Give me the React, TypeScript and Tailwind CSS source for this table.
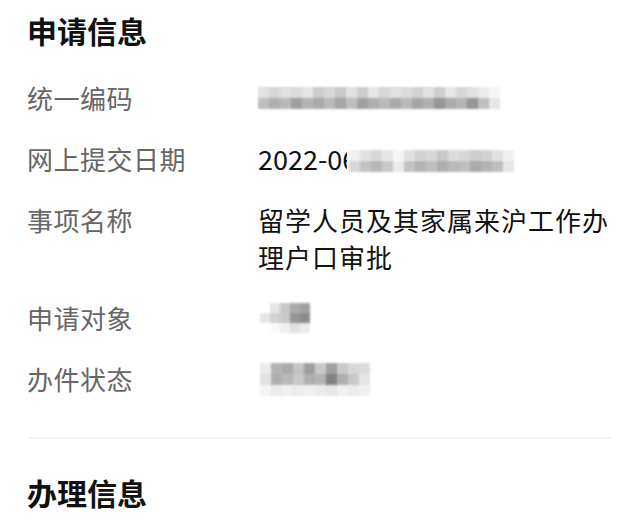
import React from "react";

type Mosaic = { cell: number; rows: number[][] };

function Blur({ m, className }: { m: Mosaic; className?: string }) {
  return (
    <div className={"flex flex-col blur-[1px] " + (className ?? "")}>
      {m.rows.map((r, i) => (
        <div key={i} className="flex">
          {r.map((v, j) => (
            <div
              key={j}
              style={{
                width: m.cell,
                height: m.cell,
                backgroundColor: `rgb(${v},${v},${v})`,
              }}
            />
          ))}
        </div>
      ))}
    </div>
  );
}

const m1: Mosaic = {
  cell: 11,
  rows: [
    [225, 215, 225, 220, 230, 205, 215, 200, 225, 205, 230, 215, 225, 220, 210, 225, 205, 230, 215, 225, 235, 245],
    [190, 175, 185, 160, 180, 170, 185, 165, 190, 160, 175, 185, 170, 185, 165, 175, 150, 170, 180, 150, 190, 230],
  ],
};

const m2: Mosaic = {
  cell: 11,
  rows: [
    [240, 225, 215, 230, 245, 225, 210, 215, 200, 220, 215, 205, 210, 225, 240],
    [215, 195, 185, 200, 235, 195, 180, 190, 175, 185, 190, 170, 180, 190, 230],
  ],
};

const m3: Mosaic = {
  cell: 10,
  rows: [
    [255, 230, 200, 170, 160],
    [230, 210, 200, 150, 140],
    [255, 250, 240, 225, 235],
  ],
};

const m4: Mosaic = {
  cell: 11,
  rows: [
    [235, 180, 170, 195, 160, 200, 160, 200, 215, 220],
    [225, 175, 185, 200, 175, 180, 130, 175, 200, 230],
    [245, 235, 240, 235, 240, 235, 230, 240, 235, 240],
  ],
};

function Row({ label, children }: { label: string; children: React.ReactNode }) {
  return (
    <div className="flex">
      <div className="w-[231px] shrink-0 text-[#666666] h-[37px] tracking-[0.5px]">{label}</div>
      <div className="flex-1 text-[#111111]">{children}</div>
    </div>
  );
}

export default function App() {
  return (
    <div
      className="w-[640px] h-[530px] bg-white overflow-hidden px-[27px] pt-[12px]"
      style={{ fontFamily: '"Noto Sans CJK SC", "Noto Sans", sans-serif' }}
    >
      <div className="text-[30px] leading-[36px] font-bold text-[#111111]">申请信息</div>
      <div className="mt-[31px] flex flex-col gap-[24px] text-[26px] leading-[37px]">
        <Row label="统一编码">
          <div className="flex items-center h-[37px]">
            <Blur m={m1} />
          </div>
        </Row>
        <Row label="网上提交日期">
          <div className="flex items-center h-[37px] text-[27px]">
            <span>2022-06</span>
            <div className="relative -ml-[10px] bg-white pl-[2px]">
              <Blur m={m2} className="mt-[4px]" />
            </div>
          </div>
        </Row>
        <Row label="事项名称">
          <div className="tracking-[1px]">留学人员及其家属来沪工作办理户口审批</div>
        </Row>
        <Row label="申请对象">
          <div className="flex items-center h-[37px]">
            <Blur m={m3} className="ml-[2px]" />
          </div>
        </Row>
        <Row label="办件状态">
          <div className="flex items-center h-[37px]">
            <Blur m={m4} className="ml-[2px] mt-[2px]" />
          </div>
        </Row>
      </div>
      <div className="mt-[40px] h-[2px] bg-[#f3f3f3]" />
      <div className="mt-[35px] text-[30px] leading-[36px] font-bold text-[#111111]">办理信息</div>
    </div>
  );
}
